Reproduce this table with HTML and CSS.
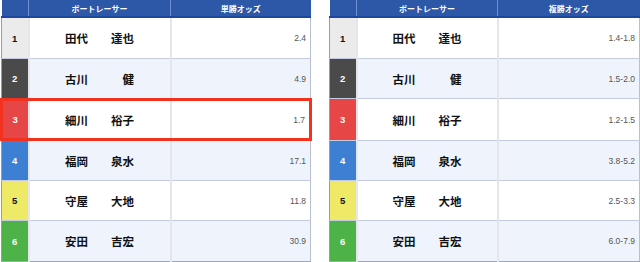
FILE: index.html
```html
<!DOCTYPE html>
<html lang="ja">
<head>
<meta charset="utf-8">
<link rel="stylesheet" href="styles.css">
</head>
<body>
<div class="wrap">
  <table class="odds left">
    <colgroup><col class="c-num"><col class="c-name"><col class="c-val"></colgroup>
    <thead>
      <tr><th></th><th>ボートレーサー</th><th>単勝オッズ</th></tr>
    </thead>
    <tbody>
      <tr class="odd h40"><td class="num n1">1</td><td class="name">田代　　達也</td><td class="val">2.4</td></tr>
      <tr class="even h39"><td class="num n2">2</td><td class="name">古川　　　健</td><td class="val">4.9</td></tr>
      <tr class="odd hl h37"><td class="num n3">3</td><td class="name">細川　　裕子</td><td class="val">1.7</td></tr>
      <tr class="even h39"><td class="num n4">4</td><td class="name">福岡　　泉水</td><td class="val">17.1</td></tr>
      <tr class="odd h39"><td class="num n5">5</td><td class="name">守屋　　大地</td><td class="val">11.8</td></tr>
      <tr class="even h40"><td class="num n6">6</td><td class="name">安田　　吉宏</td><td class="val">30.9</td></tr>
    </tbody>
  </table>
  <table class="odds right">
    <colgroup><col class="c-num"><col class="c-name2"><col class="c-val"></colgroup>
    <thead>
      <tr><th></th><th>ボートレーサー</th><th>複勝オッズ</th></tr>
    </thead>
    <tbody>
      <tr class="odd h40"><td class="num n1">1</td><td class="name">田代　　達也</td><td class="val">1.4-1.8</td></tr>
      <tr class="even h39"><td class="num n2">2</td><td class="name">古川　　　健</td><td class="val">1.5-2.0</td></tr>
      <tr class="odd h41"><td class="num n3">3</td><td class="name">細川　　裕子</td><td class="val">1.2-1.5</td></tr>
      <tr class="even h39"><td class="num n4">4</td><td class="name">福岡　　泉水</td><td class="val">3.8-5.2</td></tr>
      <tr class="odd h39"><td class="num n5">5</td><td class="name">守屋　　大地</td><td class="val">2.5-3.3</td></tr>
      <tr class="even h40"><td class="num n6">6</td><td class="name">安田　　吉宏</td><td class="val">6.0-7.9</td></tr>
    </tbody>
  </table>
</div>
</body>
</html>
```

FILE: styles.css
```css
html, body {
  margin: 0;
  padding: 0;
  background: #ffffff;
}
body {
  font-family: "Noto Sans CJK JP", "Noto Sans", sans-serif;
}
.wrap {
  display: flex;
  gap: 17px;
  align-items: flex-start;
}
.odds {
  border-collapse: collapse;
  table-layout: fixed;
}
.odds.left { width: 312px; }
.odds.right { width: 311px; }
.c-num { width: 27px; }
.c-name { width: 142px; }
.c-name2 { width: 141px; }

.odds th {
  height: 16px;
  padding: 0;
  background: #2d57a7;
  color: #ffffff;
  font-size: 8px;
  font-weight: 700;
  line-height: 15px;
  text-align: center;
  border-left: 1px solid #6f8fd0;
  border-bottom: 2px solid #1d46a0;
}
.odds th:first-child { border-left: none; }

.odds td {
  padding: 0;
  border-top: 1px solid #c4cbe0;
  border-bottom: 1px solid #c4cbe0;
  border-left: 2px solid #e4e6ea;
}
.odds tr.h37 td { height: 37px; }
.odds tr.h39 td { height: 39px; }
.odds tr.h40 td { height: 40px; }
.odds tr.h41 td { height: 41px; }
.odds td:first-child { border-left: 1px solid #8e9cc0; }
.odds td:last-child { border-right: 1px solid #b8bfd0; }
.odds tbody tr:last-child td { border-bottom: 1px solid #9aa6c4; }

.odd td { background: #ffffff; }
.even td { background: #eff4fc; }

.num {
  text-align: center;
  font-family: "Liberation Sans", Arial, sans-serif;
  font-size: 9.5px;
  font-weight: 700;
}
.odds td.n1 { background: #ebebeb; color: #111; }
.odds td.n2 { background: #4a4a4a; color: #fff; }
.odds td.n3 { background: #e64646; color: #fff; }
.odds td.n4 { background: #3d7fd2; color: #fff; }
.odds td.n5 { background: #eeea68; color: #111; }
.odds td.n6 { background: #4db248; color: #fff; }

.name {
  text-align: center;
  font-size: 11.5px;
  font-weight: 700;
  color: #111;
  white-space: pre;
}
.val {
  text-align: right;
  padding-right: 4px !important;
  font-family: "Liberation Sans", Arial, sans-serif;
  font-size: 8.5px;
  color: #555;
}

.hl td {
  border-top: 3px solid #f2321e;
  border-bottom: 3px solid #f2321e;
}
.hl td:first-child { border-left: 3px solid #f2321e; }
.hl td:last-child { border-right: 3px solid #f2321e; }
```
